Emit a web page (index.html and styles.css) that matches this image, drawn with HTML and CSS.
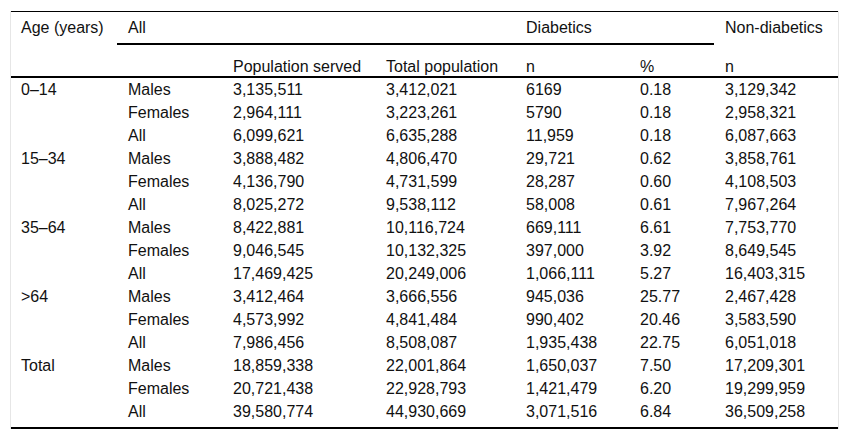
FILE: index.html
```html
<!DOCTYPE html>
<html lang="en">
<head>
<meta charset="utf-8">
<title>Diabetes prevalence table</title>
<link rel="stylesheet" href="styles.css">
</head>
<body>
<div class="frame">
<table class="data">
<colgroup>
<col class="c1"><col class="c2"><col class="c3"><col class="c4"><col class="c5"><col class="c6"><col class="c7">
</colgroup>
<thead>
<tr class="h1">
<th>Age (years)</th>
<th colspan="3" class="span">All</th>
<th colspan="2" class="span">Diabetics</th>
<th>Non-diabetics</th>
</tr>
<tr class="h2">
<th></th>
<th></th>
<th>Population served</th>
<th>Total population</th>
<th>n</th>
<th>%</th>
<th>n</th>
</tr>
</thead>
<tbody>
<tr><td>0–14</td><td>Males</td><td>3,135,511</td><td>3,412,021</td><td>6169</td><td>0.18</td><td>3,129,342</td></tr>
<tr><td></td><td>Females</td><td>2,964,111</td><td>3,223,261</td><td>5790</td><td>0.18</td><td>2,958,321</td></tr>
<tr><td></td><td>All</td><td>6,099,621</td><td>6,635,288</td><td>11,959</td><td>0.18</td><td>6,087,663</td></tr>
<tr><td>15–34</td><td>Males</td><td>3,888,482</td><td>4,806,470</td><td>29,721</td><td>0.62</td><td>3,858,761</td></tr>
<tr><td></td><td>Females</td><td>4,136,790</td><td>4,731,599</td><td>28,287</td><td>0.60</td><td>4,108,503</td></tr>
<tr><td></td><td>All</td><td>8,025,272</td><td>9,538,112</td><td>58,008</td><td>0.61</td><td>7,967,264</td></tr>
<tr><td>35–64</td><td>Males</td><td>8,422,881</td><td>10,116,724</td><td>669,111</td><td>6.61</td><td>7,753,770</td></tr>
<tr><td></td><td>Females</td><td>9,046,545</td><td>10,132,325</td><td>397,000</td><td>3.92</td><td>8,649,545</td></tr>
<tr><td></td><td>All</td><td>17,469,425</td><td>20,249,006</td><td>1,066,111</td><td>5.27</td><td>16,403,315</td></tr>
<tr><td>&gt;64</td><td>Males</td><td>3,412,464</td><td>3,666,556</td><td>945,036</td><td>25.77</td><td>2,467,428</td></tr>
<tr><td></td><td>Females</td><td>4,573,992</td><td>4,841,484</td><td>990,402</td><td>20.46</td><td>3,583,590</td></tr>
<tr><td></td><td>All</td><td>7,986,456</td><td>8,508,087</td><td>1,935,438</td><td>22.75</td><td>6,051,018</td></tr>
<tr><td>Total</td><td>Males</td><td>18,859,338</td><td>22,001,864</td><td>1,650,037</td><td>7.50</td><td>17,209,301</td></tr>
<tr><td></td><td>Females</td><td>20,721,438</td><td>22,928,793</td><td>1,421,479</td><td>6.20</td><td>19,299,959</td></tr>
<tr class="last"><td></td><td>All</td><td>39,580,774</td><td>44,930,669</td><td>3,071,516</td><td>6.84</td><td>36,509,258</td></tr>
</tbody>
</table>
</div>
</body>
</html>
```

FILE: styles.css
```css
html, body {
  margin: 0;
  padding: 0;
  background: #fff;
}

body {
  font-family: "Liberation Sans", Arial, sans-serif;
  font-size: 16px;
  color: #111;
}

.frame {
  margin: 11px 0 0 10px;
  width: 827px;
  border-left: 1px solid #e6e6e6;
  border-right: 1px solid #e6e6e6;
}

.data {
  width: 827px;
  table-layout: fixed;
  border-collapse: separate;
  border-spacing: 0;
  border-top: 1px solid #000;
  border-bottom: 2px solid #000;
}

.c1 { width: 106px; }
.c2 { width: 105px; }
.c3 { width: 153px; }
.c4 { width: 140px; }
.c5 { width: 114px; }
.c6 { width: 85px; }
.c7 { width: 124px; }

.data th,
.data td {
  text-align: left;
  font-weight: normal;
  line-height: 18px;
  padding: 3px 10px 2px 11px;
  white-space: nowrap;
  vertical-align: top;
}

.data th:first-child,
.data td:first-child {
  padding-left: 10px;
}

.h1 th {
  padding-top: 7px;
  padding-bottom: 6px;
  vertical-align: bottom;
  border-bottom: 2px solid transparent;
}

.h1 th.span {
  border-bottom-color: #000;
}

.h2 th {
  padding-top: 13px;
  padding-bottom: 0;
  vertical-align: bottom;
  border-bottom: 2px solid #000;
}

.last td {
  padding-bottom: 6px;
}
```
